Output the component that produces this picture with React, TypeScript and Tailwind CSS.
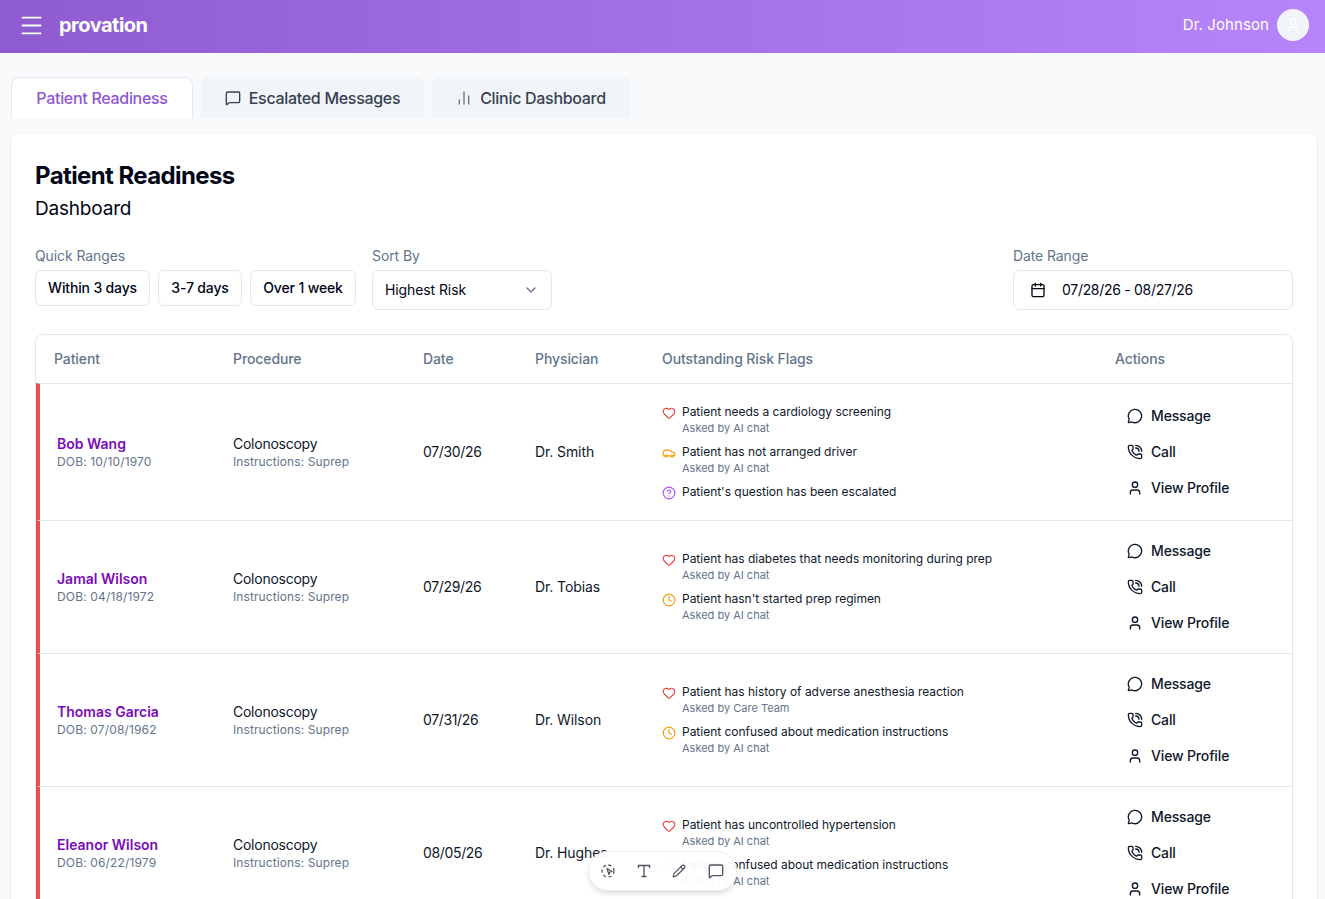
import { BarChart2, Calendar, Car, ChevronDown, CircleHelp, Clock, Heart, Menu, MessageCircle, MessageSquare, Pencil, PhoneCall, User } from "lucide-react";

type Flag = { kind: "heart" | "car" | "help" | "clock"; text: string; by?: string };
type Row = { name: string; dob: string; date: string; doc: string; flags: Flag[] };

const rows: Row[] = [
  {
    name: "Bob Wang", dob: "10/10/1970", date: "07/30/26", doc: "Dr. Smith",
    flags: [
      { kind: "heart", text: "Patient needs a cardiology screening", by: "Asked by AI chat" },
      { kind: "car", text: "Patient has not arranged driver", by: "Asked by AI chat" },
      { kind: "help", text: "Patient's question has been escalated" },
    ],
  },
  {
    name: "Jamal Wilson", dob: "04/18/1972", date: "07/29/26", doc: "Dr. Tobias",
    flags: [
      { kind: "heart", text: "Patient has diabetes that needs monitoring during prep", by: "Asked by AI chat" },
      { kind: "clock", text: "Patient hasn't started prep regimen", by: "Asked by AI chat" },
    ],
  },
  {
    name: "Thomas Garcia", dob: "07/08/1962", date: "07/31/26", doc: "Dr. Wilson",
    flags: [
      { kind: "heart", text: "Patient has history of adverse anesthesia reaction", by: "Asked by Care Team" },
      { kind: "clock", text: "Patient confused about medication instructions", by: "Asked by AI chat" },
    ],
  },
  {
    name: "Eleanor Wilson", dob: "06/22/1979", date: "08/05/26", doc: "Dr. Hughes",
    flags: [
      { kind: "heart", text: "Patient has uncontrolled hypertension", by: "Asked by AI chat" },
      { kind: "clock", text: "Patient confused about medication instructions", by: "Asked by AI chat" },
    ],
  },
];

function FlagIcon({ kind }: { kind: Flag["kind"] }) {
  if (kind === "heart") return <Heart size={14} className="text-[#ef4444]" />;
  if (kind === "car") return <Car size={14} className="text-[#f59e0b]" />;
  if (kind === "help") return <CircleHelp size={14} className="text-[#a855f7]" />;
  return <Clock size={14} className="text-[#f59e0b]" />;
}

function PatientRow({ row }: { row: Row }) {
  return (
    <div className="flex items-center border-t border-[#e2e8f0] border-l-4 border-l-[#e94f4f] text-sm text-[#0f172a]">
      <div className="w-[193px] pl-[17px] pt-[2px]">
        <div className="font-semibold text-[#7a0bb8] leading-[18px]">{row.name}</div>
        <div className="text-xs text-[#64748b] leading-[18px] tracking-[0.15px]">DOB: {row.dob}</div>
      </div>
      <div className="w-[190px] pt-[2px]">
        <div className="leading-[18px] tracking-[-0.25px]">Colonoscopy</div>
        <div className="text-xs text-[#64748b] leading-[18px] tracking-[0.1px]">Instructions: Suprep</div>
      </div>
      <div className="w-[112px] tracking-[-0.35px]">{row.date}</div>
      <div className="w-[127px] tracking-[-0.1px]">{row.doc}</div>
      <div className="w-[465px] flex flex-col gap-2 py-5">
        {row.flags.map((f) => (
          <div key={f.text} className="flex gap-1.5">
            <span className="mt-[2px] shrink-0"><FlagIcon kind={f.kind} /></span>
            <div>
              <div className="text-xs leading-4 tracking-[-0.02px]">{f.text}</div>
              {f.by && <div className="text-[11px] leading-4 text-[#64748b]">{f.by}</div>}
            </div>
          </div>
        ))}
      </div>
      <div className="flex flex-col py-3 font-medium tracking-[-0.15px]">
        <div className="h-9 flex items-center gap-2"><MessageCircle size={16} />Message</div>
        <div className="h-9 flex items-center gap-2"><PhoneCall size={16} />Call</div>
        <div className="h-9 flex items-center gap-2"><User size={16} />View Profile</div>
      </div>
    </div>
  );
}

export default function App() {
  return (
    <div className="h-screen overflow-hidden relative bg-[#f8fafc] font-['Inter',sans-serif]">
      <header className="h-[53px] pb-[3px] flex items-center justify-between pl-[18px] pr-4 text-white bg-gradient-to-r from-[#8f5bd0] to-[#b785fa]">
        <div className="flex items-center gap-[14px]">
          <Menu size={27} strokeWidth={1.75} />
          <span className="text-xl font-bold tracking-tight">provation</span>
        </div>
        <div className="flex items-center gap-2">
          <span className="text-[15px] tracking-[0.1px]">Dr. Johnson</span>
          <span className="w-8 h-8 rounded-full bg-[#f1f5f9] flex items-center justify-center"><User size={16} className="text-white" /></span>
        </div>
      </header>

      <main className="pl-[11px] pr-2 pt-6">
        <nav className="flex gap-2 h-[41px] font-medium tracking-[-0.3px]">
          <div className="w-[182px] flex items-center justify-center bg-white border border-b-0 border-[#e2e8f0] rounded-t-lg text-[#8f55d4]">Patient Readiness</div>
          <div className="w-[223px] flex items-center justify-center gap-2 bg-[#f1f5f9] rounded-t-lg text-[#374151]"><MessageSquare size={16} />Escalated Messages</div>
          <div className="w-[198px] flex items-center justify-center gap-2 bg-[#f1f5f9] rounded-t-lg text-[#374151]"><BarChart2 size={16} className="text-[#6b7280]" />Clinic Dashboard</div>
        </nav>

        <section className="mt-4 bg-white rounded-lg shadow-sm p-6 text-[#020617]">
          <h1 className="text-2xl font-bold leading-8 tracking-tight mt-0.5">Patient Readiness</h1>
          <h2 className="text-[19px] leading-8 tracking-[-0.2px] mt-px">Dashboard</h2>

          <div className="flex justify-between mt-[21px]">
            <div className="flex gap-4">
              <div>
                <div className="text-sm text-[#64748b] leading-5 mb-1 tracking-[-0.1px]">Quick Ranges</div>
                <div className="flex gap-2 text-sm font-medium tracking-[-0.15px]">
                  <div className="w-[115px] h-9 flex items-center justify-center border border-[#e2e8f0] rounded-md">Within 3 days</div>
                  <div className="w-[84px] h-9 flex items-center justify-center border border-[#e2e8f0] rounded-md">3-7 days</div>
                  <div className="w-[106px] h-9 flex items-center justify-center border border-[#e2e8f0] rounded-md">Over 1 week</div>
                </div>
              </div>
              <div>
                <div className="text-sm text-[#64748b] leading-5 mb-1 tracking-[-0.1px]">Sort By</div>
                <div className="w-[180px] h-10 px-3 flex items-center justify-between border border-[#e2e8f0] rounded-md text-sm tracking-[-0.1px]">
                  Highest Risk
                  <ChevronDown size={16} className="text-[#64748b]" />
                </div>
              </div>
            </div>
            <div>
              <div className="text-sm text-[#64748b] leading-5 mb-1 tracking-[-0.1px]">Date Range</div>
              <div className="w-[280px] h-10 px-4 flex items-center gap-4 border border-[#e2e8f0] rounded-md text-sm tracking-[-0.3px]">
                <Calendar size={16} />
                07/28/26 - 08/27/26
              </div>
            </div>
          </div>

          <div className="mt-6 border border-[#e2e8f0] rounded-lg">
            <div className="h-12 flex items-center text-sm font-medium text-[#64748b] tracking-[-0.1px]">
              <div className="w-[197px] pl-[18px]">Patient</div>
              <div className="w-[190px]">Procedure</div>
              <div className="w-[112px]">Date</div>
              <div className="w-[127px]">Physician</div>
              <div className="w-[453px]">Outstanding Risk Flags</div>
              <div>Actions</div>
            </div>
            {rows.map((r) => <PatientRow key={r.name} row={r} />)}
          </div>
        </section>
      </main>

      <div className="absolute left-[588px] top-[851px] w-[149px] h-10 flex items-center justify-between pl-[11px] pr-3 rounded-full bg-white/95 border border-[#eceef1] shadow-md text-[#4b5563]">
        <svg width="16" height="16" viewBox="0 0 16 16" fill="none" stroke="currentColor" strokeWidth="1.3" strokeLinejoin="round">
          <circle cx="8" cy="8" r="6" strokeDasharray="3 2.6" />
          <path d="M7 5.5l5 3-2.2.7-.9 2.2z" />
        </svg>
        <svg width="16" height="16" viewBox="0 0 16 16" fill="none" stroke="currentColor" strokeWidth="1.3" strokeLinecap="round">
          <path d="M2.5 4.5V2.5h11v2M8 2.5v11M6 13.5h4" />
        </svg>
        <Pencil size={14} className="mr-0.5" />
        <MessageSquare size={16} />
      </div>
    </div>
  );
}
